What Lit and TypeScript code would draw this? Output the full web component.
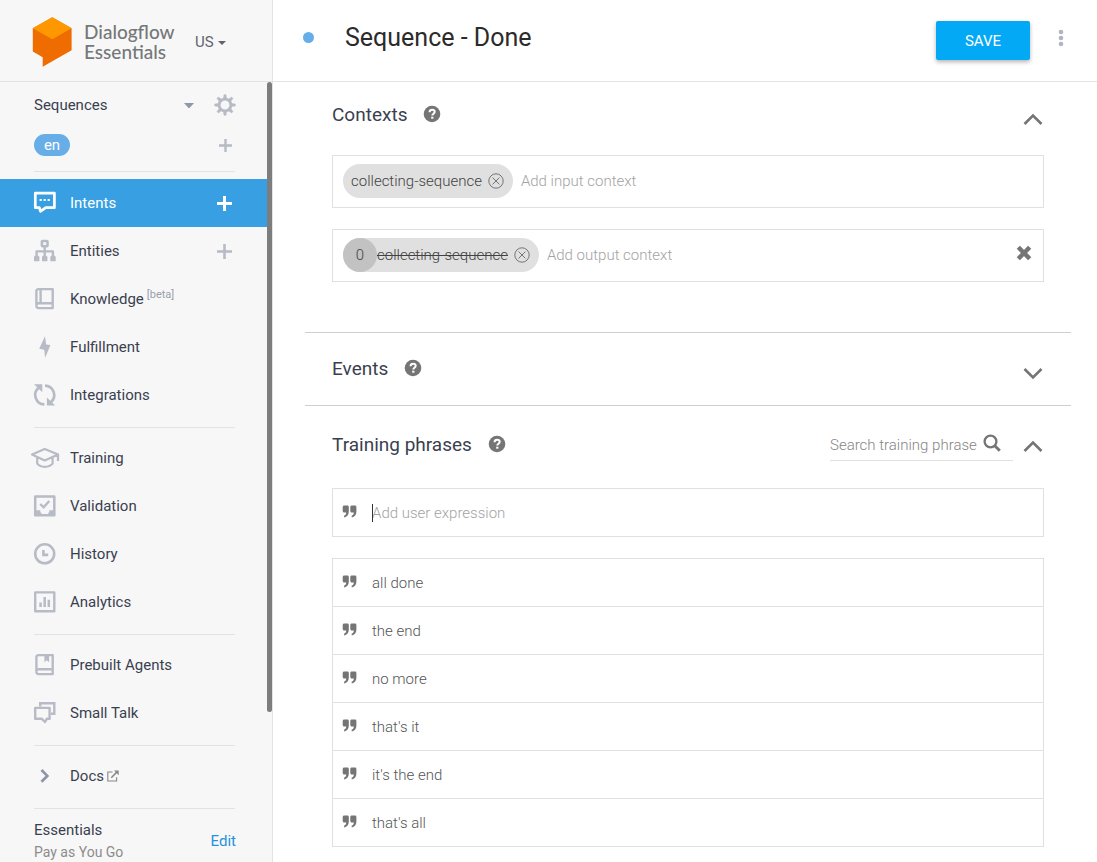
import { LitElement, html, css, svg, nothing, type TemplateResult } from "lit";
import { customElement } from "lit/decorators.js";
import { classMap } from "lit/directives/class-map.js";

const icon = (body: unknown, cls = "glyph", size = 26): TemplateResult =>
  html`<svg class=${cls} viewBox="0 0 ${size} ${size}" width=${size} height=${size} aria-hidden="true">${body}</svg>`;

const glyphs = {
  intents: svg`<path d="M3.3 3.1h19.1v14.6h-8.7l-5.2 3.6-1.1-3.6H3.3z" fill="none" stroke="currentColor" stroke-width="2.7" stroke-linejoin="round"/>
    <path d="M7.600 8.900h2.200v2.200H7.600zM11.600 8.900h2.200v2.200h-2.200zM15.600 8.900h2.200v2.200h-2.200z" fill="currentColor"/>`,
  entities: svg`<rect x="9.900" y="3" width="5.600" height="5.200" rx=".6" fill="none" stroke="currentColor" stroke-width="2.600"/>
    <path d="M12.700 9v10M4.600 19v-5.600h16.300V19" fill="none" stroke="currentColor" stroke-width="2.400" stroke-linejoin="round"/>
    <path d="M3 17.700h3.400l1 1v4.600H2v-4.600zM11 17.700h3.400l1 1v4.600H10v-4.600zM19.300 17.700h3.400l1 1v4.600h-5.400v-4.600z" fill="currentColor"/>`,
  knowledge: svg`<path d="M6.400 3.100h14.300v19H6.400a2 2 0 0 1-2-2V5.100a2 2 0 0 1 2-2zM4.600 19.400a2 2 0 0 1 2-2.200h14.200M8.600 3v14" fill="none" stroke="currentColor" stroke-width="2.400" stroke-linejoin="round"/>`,
  fulfillment: svg`<path d="M13 2.200 7.200 14.800l5 1 1 8 5.200-12.800-4.300-.6z" fill="currentColor"/>`,
  integrations: svg`<path d="M12.400 22.400A9.400 9.400 0 0 1 6.600 5.800M13 3.600a9.400 9.400 0 0 1 5.800 16.600" fill="none" stroke="currentColor" stroke-width="2.700"/>
    <path d="M2 2.300h8.300v8zM23.200 23.600h-8.300v-8z" fill="currentColor"/>`,
  training: svg`<path d="M0 9.600 12.700 3.900l13.400 5.700-13.400 5.800zM5.200 12.400v6.200c2 2.400 4.700 3.200 7.600 3.200s5.800-.9 7.800-3.200v-6.200M26 9.600v6.400" fill="none" stroke="currentColor" stroke-width="2.200" stroke-linejoin="round"/>`,
  validation: svg`<path d="M3.200 3.400h19.100v18.800H3.200z" fill="none" stroke="currentColor" stroke-width="2.500" stroke-linejoin="round"/>
    <path d="M3 17.200h5.300v2.400h1v2h7v-2h1v-2.400h5.200v5.100H3z" fill="currentColor"/>
    <path d="m8.200 11 3.400 3.300 5.700-6.300" fill="none" stroke="currentColor" stroke-width="2.400"/>`,
  history: svg`<circle cx="12.700" cy="12.800" r="9.500" fill="none" stroke="currentColor" stroke-width="2.600"/>
    <path d="M11.400 9v4.900h4.800" fill="none" stroke="currentColor" stroke-width="2.600"/>`,
  analytics: svg`<path d="M3.200 3.400h19.100v18.800H3.200z" fill="none" stroke="currentColor" stroke-width="2.400" stroke-linejoin="round"/>
    <path d="M8.600 18v-4.600M12.700 18V8M16.800 18v-7.300" fill="none" stroke="currentColor" stroke-width="2.500"/>`,
  prebuilt: svg`<path d="M6.400 3.100h14.300v19H6.400a2 2 0 0 1-2-2V5.100a2 2 0 0 1 2-2zM4.600 19.400a2 2 0 0 1 2-2.200h14.200" fill="none" stroke="currentColor" stroke-width="2.400" stroke-linejoin="round"/>
    <path d="M12.400 3h4.700v7.200l-2.300-1.900-2.400 1.900z" fill="currentColor"/>`,
  smalltalk: svg`<path d="M8.200 6.500V3.300h14.100v10.500h-3.400" fill="none" stroke="currentColor" stroke-width="2.400"/>
    <path d="M3.200 7.900h14.400v10.900h-2.800l-1.800 3.200-3.200-3.200H3.200z" fill="none" stroke="currentColor" stroke-width="2.400" stroke-linejoin="round"/>`,
  docs: svg`<path d="m9.500 7 5.800 5.900-5.800 5.900" fill="none" stroke="#8d95a6" stroke-width="2.700"/>`,
};

const external = icon(
  svg`<path d="M5.500 2H.8v9h8.800V7.300" fill="none" stroke="currentColor" stroke-width="1.100"/>
  <path d="m4.300 7.700 5.700-5.800" fill="none" stroke="currentColor" stroke-width="1.500"/><path d="M7 .6h4.700v4.700z" fill="currentColor"/>`,
  "external", 12);

const plus = (size: number, weight: number) =>
  icon(svg`<path d="M${size / 2} 0v${size}M0 ${size / 2}h${size}" stroke="currentColor" stroke-width=${weight} />`, "plus", size);

const gear = icon(
  svg`<circle cx="11" cy="11" r="5.900" fill="none" stroke="currentColor" stroke-width="2.900"/>
  ${[0, 45, 90, 135, 180, 225, 270, 315].map(
    (a) => svg`<path d="M9.400 4.800 10 .7h2l.6 4.100z" fill="currentColor" stroke="currentColor" stroke-width=".5" transform="rotate(${a} 11 11)"/>`)}`,
  "gear", 22);

const help = icon(
  svg`<circle cx="9" cy="9" r="8.300" fill="#757575"/>
  <path d="M6.500 7.200C6.600 5.500 7.600 4.700 9.100 4.700c1.500 0 2.600.8 2.600 2.100 0 1.900-2.400 1.900-2.400 3.700" fill="none" stroke="#fff" stroke-width="2"/>
  <path d="M8.200 11.700h2.200v2H8.200z" fill="#fff"/>`, "help", 18);

const quote = icon(
  svg`<path d="M2.300.5h3c1 0 1.500.6 1.500 1.500v4.600c0 3.200-1.700 5.500-4.700 5.800v-2c1.400-.3 2.100-1.300 2.100-3H2.300C1.300 7.400.7 6.800.7 5.900V2C.7 1.100 1.300.5 2.300.5zM9.900.5h3c1 0 1.500.6 1.500 1.500v4.600c0 3.200-1.700 5.500-4.700 5.800v-2c1.400-.3 2.100-1.300 2.100-3H9.900c-1 0-1.600-.6-1.600-1.500V2c0-.9.600-1.500 1.600-1.500z" fill="#757575"/>`,
  "quote", 15);

const remove = icon(
  svg`<circle cx="8" cy="8" r="7.200" fill="none" stroke="currentColor"/><path d="m4.600 4.600 6.800 6.800M11.400 4.600l-6.800 6.800" stroke="currentColor"/>`,
  "remove-glyph", 16);

interface NavEntry {
  id: keyof typeof glyphs;
  label: string;
  tag?: string;
  addable?: boolean;
  active?: boolean;
  external?: boolean;
}

const groups: NavEntry[][] = [
  [
    { id: "intents", label: "Intents", addable: true, active: true },
    { id: "entities", label: "Entities", addable: true },
    { id: "knowledge", label: "Knowledge", tag: "[beta]" },
    { id: "fulfillment", label: "Fulfillment" },
    { id: "integrations", label: "Integrations" },
  ],
  [
    { id: "training", label: "Training" },
    { id: "validation", label: "Validation" },
    { id: "history", label: "History" },
    { id: "analytics", label: "Analytics" },
  ],
  [
    { id: "prebuilt", label: "Prebuilt Agents" },
    { id: "smalltalk", label: "Small Talk" },
  ],
  [{ id: "docs", label: "Docs", external: true }],
];

const phrases = ["all done", "the end", "no more", "that's it", "it's the end", "that's all"];

const base = css`
  :host { display: block; font-family: Roboto, "Liberation Sans", sans-serif; font-size: 15px; }
  * { box-sizing: border-box; }
  svg { display: block; flex: none; overflow: visible; }
  button { font: inherit; color: inherit; background: none; border: 0; padding: 0; margin: 0; display: flex; align-items: center; justify-content: center; cursor: pointer; }
  input { font: inherit; border: 0; padding: 0; margin: 0; background: none; outline: 0; min-width: 0; }
  a { color: inherit; text-decoration: none; }
`;

@customElement("side-bar")
export class SideBar extends LitElement {
  static styles = [base, css`
    :host { position: relative; background: #f7f7f7; border-right: 1px solid #e3e3e3; color: #3a3f50; overflow: hidden; }
    .brand { display: flex; align-items: center; height: 82px; padding: 2px 0 0 32px; border-bottom: 1px solid #e3e3e3; }
    .brand-name { margin: 0 23px 0 12px; font: 500 19px/20px Lato, sans-serif; color: #757779; width: 88px; }
    .region { gap: 4px; color: #5f6470; }
    .agent, .language { display: flex; align-items: center; padding: 0 36px 0 34px; }
    .agent { height: 46px; }
    .language { height: 34px; justify-content: space-between; }
    .agent-name { flex: 1; }
    .agent-menu { margin-right: 20px; color: #9097a8; }
    .muted { width: 22px; height: 22px; color: #b6bbc6; }
    .pill { width: 36px; height: 22px; border-radius: 11px; background: #67aee8; color: #fff; }
    .line { height: 1px; margin: 8px 37px 6px 34px; background: #e3e3e3; }
    .line.first { margin: 9px 37px 7px 34px; }
    .group { list-style: none; margin: 0; padding: 0; }
    .entry { display: flex; align-items: center; height: 48px; padding: 0 37px 0 32px; }
    .link { display: flex; align-items: center; flex: 1; gap: 12px; }
    .glyph { color: #b6bbc6; margin-bottom: 1px; }
    .tag { align-self: flex-start; margin: 3px 0 0 -9px; font-size: 11px; line-height: 12px; color: #9a9fac; }
    .external { margin-left: -9px; color: #888; }
    .add { width: 22px; height: 22px; color: #b6bbc6; }
    .active { background: #38a0e2; color: #fff; }
    .active .glyph, .active .add { color: #fff; }
    .plan { display: flex; align-items: center; justify-content: space-between; padding: 4px 36px 0 34px; line-height: 22px; }
    .price { font-size: 14px; color: #8c8c8c; }
    .edit { color: #2493df; }
    .thumb { position: absolute; top: 82px; right: 0; width: 5px; height: 630px; border-radius: 3px; background: #7d7d7d; }
  `];

  render() {
    return html`
      <div class="brand">
        <svg viewBox="0 0 40 50" width="40" height="50" role="img" aria-label="Dialogflow">
          <path d="M20.300.3.800 11.200v23.400l9.900 5.700v9.400l28.900-16.400V11.200z" fill="#ef6c00"/>
          <path d="M20.300.3.800 11.200 20.300 22.300 39.600 11.200z" fill="#ff9800"/>
        </svg>
        <div class="brand-name">Dialogflow Essentials</div>
        <button class="region">US ${icon(svg`<path d="M0 3h8L4 7z" fill="currentColor"/>`, "caret", 8)}</button>
      </div>
      <div class="agent">
        <span class="agent-name">Sequences</span>
        <button class="agent-menu" aria-label="Switch agent">${icon(svg`<path d="M0 3h10L5.500 8h-1z" fill="currentColor"/>`, "caret", 10)}</button>
        <button class="muted" aria-label="Agent settings">${gear}</button>
      </div>
      <div class="language">
        <button class="pill">en</button>
        <button class="muted" aria-label="Add language">${plus(13, 2.4)}</button>
      </div>
      <div class="line first"></div>
      <nav aria-label="Agent">
        ${groups.map((g) => html`
          <ul class="group">${g.map((e) => html`
            <li class=${classMap({ entry: true, active: !!e.active })}>
              <a class="link" href="#${e.id}">
                ${icon(glyphs[e.id])}<span>${e.label}</span>
                ${e.tag ? html`<span class="tag">${e.tag}</span>` : nothing}
                ${e.external ? external : nothing}
              </a>
              ${e.addable ? html`<button class="add" aria-label="Create ${e.label}">${plus(15, e.active ? 3 : 2.6)}</button>` : nothing}
            </li>`)}
          </ul>
          <div class="line"></div>`)}
      </nav>
      <div class="plan">
        <div><div>Essentials</div><div class="price">Pay as You Go</div></div>
        <a class="edit" href="#plan">Edit</a>
      </div>
      <div class="thumb"></div>`;
  }
}

const chevron = (open: boolean) =>
  icon(svg`<path d=${open ? "m1.500 14 8.500-8.500 8.500 8.500" : "m1.500 5 8.500 8.500 8.500-8.500"} fill="none" stroke="#757575" stroke-width="2.600"/>`, "chevron", 20);

@customElement("intent-editor")
export class IntentEditor extends LitElement {
  static styles = [base, css`
    :host { background: #fff; color: #616161; min-width: 0; overflow: hidden; }
    .top { display: flex; align-items: center; height: 82px; padding: 0 30px; border-bottom: 1px solid #e3e3e3; }
    .dot { width: 11px; height: 11px; margin: 0 31px 6px 0; border-radius: 50%; background: #67aee8; }
    .title { flex: 1; height: 34px; margin-bottom: 6px; font-size: 25px; color: #2b2b2b; }
    .save { width: 94px; height: 39px; border-radius: 2px; background: #03a9f4; color: #fff; box-shadow: 0 2px 4px rgba(0, 0, 0, .3); }
    .more { width: 12px; height: 24px; margin: 0 0 6px 25px; color: #b0b5c0; }
    .body { padding: 0 26px 0 32px; }
    section { padding: 0 27px; }
    section + section { border-top: 1px solid #cfcfcf; }
    .head { display: flex; align-items: center; height: 72px; padding-bottom: 2px; }
    .contexts { padding-bottom: 50px; }
    .contexts .head { height: 66px; }
    .training .head { height: 76px; padding: 0; }
    h2 { margin: 0 16px 0 0; font-size: 19px; font-weight: 400; color: #3a3f50; }
    .toggle { width: 20px; height: 20px; margin: 11px 1px 0 auto; }
    .box { display: flex; align-items: center; padding: 8px 11px 9px 10px; border: 1px solid #e0e0e0; }
    .box + .box { margin-top: 21px; }
    .contexts .head + .box { margin-top: 7px; }
    .chip { display: flex; align-items: center; height: 34px; padding: 0 9px 0 8px; margin-right: 8px; border-radius: 17px; background: #e0e0e0; gap: 6px; font-weight: 300; color: #424242; }
    .chip.spent { padding-left: 0; }
    .spent .name { text-decoration: line-through; }
    .life { display: grid; place-items: center; width: 34px; height: 34px; margin-right: -6px; border-radius: 50%; background: #c2c2c2; }
    .remove { color: #757575; }
    .clear { margin-bottom: 5px; }
    input { flex: 1; color: #616161; }
    input::placeholder { color: #a3a3a3; opacity: 1; font-weight: 300; }
    .field::placeholder { color: #858585; }
    .search { display: flex; align-items: center; width: 183px; height: 30px; margin: 3px 0 0 auto; padding-right: 12px; border-bottom: 1px solid #e0e0e0; }
    .lens { margin-bottom: 5px; }
    .search + .toggle { margin: 6px 1px 0 10px; }
    .expression, .phrase { display: flex; align-items: center; height: 48px; padding-left: 9px; gap: 15px; }
    .expression { height: 49px; margin: 6px 0 21px; border: 1px solid #e0e0e0; }
    .entry { position: relative; display: flex; flex: 1; }
    .cursor { position: absolute; left: 0; top: 0; width: 1px; height: 18px; background: #333; }
    .phrases { list-style: none; margin: 0; padding: 0; border: 1px solid #e0e0e0; border-top: 0; }
    .phrase { font-weight: 300; color: #555; border-top: 1px solid #e0e0e0; }
  `];

  private head(title: string, open: boolean, extra: unknown = nothing) {
    return html`<div class="head">
      <h2>${title}</h2>${help}${extra}
      <button class="toggle" aria-label="Toggle ${title}" aria-expanded=${open}>${chevron(open)}</button>
    </div>`;
  }

  render() {
    return html`
      <header class="top">
        <span class="dot"></span>
        <input class="title" aria-label="Intent name" value="Sequence - Done">
        <button class="save">SAVE</button>
        <button class="more" aria-label="More options">
          <svg viewBox="0 0 6 18" width="6" height="18"><g fill="currentColor"><circle cx="3" cy="3" r="2.300"/><circle cx="3" cy="9" r="2.300"/><circle cx="3" cy="15" r="2.300"/></g></svg>
        </button>
      </header>
      <main class="body">
        <section class="contexts">
          ${this.head("Contexts", true)}
          <div class="box">
            <span class="chip"><span class="name">collecting-sequence</span>
              <button class="remove" aria-label="Remove input context">${remove}</button></span>
            <input aria-label="Add input context" placeholder="Add input context">
          </div>
          <div class="box">
            <span class="chip spent"><span class="life">0</span><span class="name">collecting-sequence</span>
              <button class="remove" aria-label="Remove output context">${remove}</button></span>
            <input aria-label="Add output context" placeholder="Add output context">
            <button class="clear" aria-label="Clear output contexts">${icon(svg`<path d="m2.300 2.300 11.400 11.400M13.700 2.300 2.300 13.700" stroke="#757575" stroke-width="4.400"/>`, "cross", 16)}</button>
          </div>
        </section>
        <section>${this.head("Events", false)}</section>
        <section class="training">
          ${this.head("Training phrases", true, html`
            <label class="search">
              <input class="field" type="text" aria-label="Search training phrases" placeholder="Search training phrase">
              ${icon(svg`<circle cx="7.500" cy="7.500" r="5.900" fill="none" stroke="#757575" stroke-width="2.300"/><path d="m11.800 11.800 5 5" stroke="#757575" stroke-width="2.900"/>`, "lens", 18)}
            </label>`)}
          <div class="expression">${quote}
            <div class="entry"><input aria-label="Add user expression" placeholder="Add user expression"><span class="cursor"></span></div>
          </div>
          <ul class="phrases">
            ${phrases.map((p) => html`<li class="phrase">${quote}<span>${p}</span></li>`)}
          </ul>
        </section>
      </main>`;
  }
}

@customElement("app-root")
export class AppRoot extends LitElement {
  static styles = css`
    :host { display: grid; grid-template-columns: 273px minmax(0, 1fr); height: 100vh; overflow: hidden; }
  `;

  render() {
    return html`<side-bar></side-bar><intent-editor></intent-editor>`;
  }
}
